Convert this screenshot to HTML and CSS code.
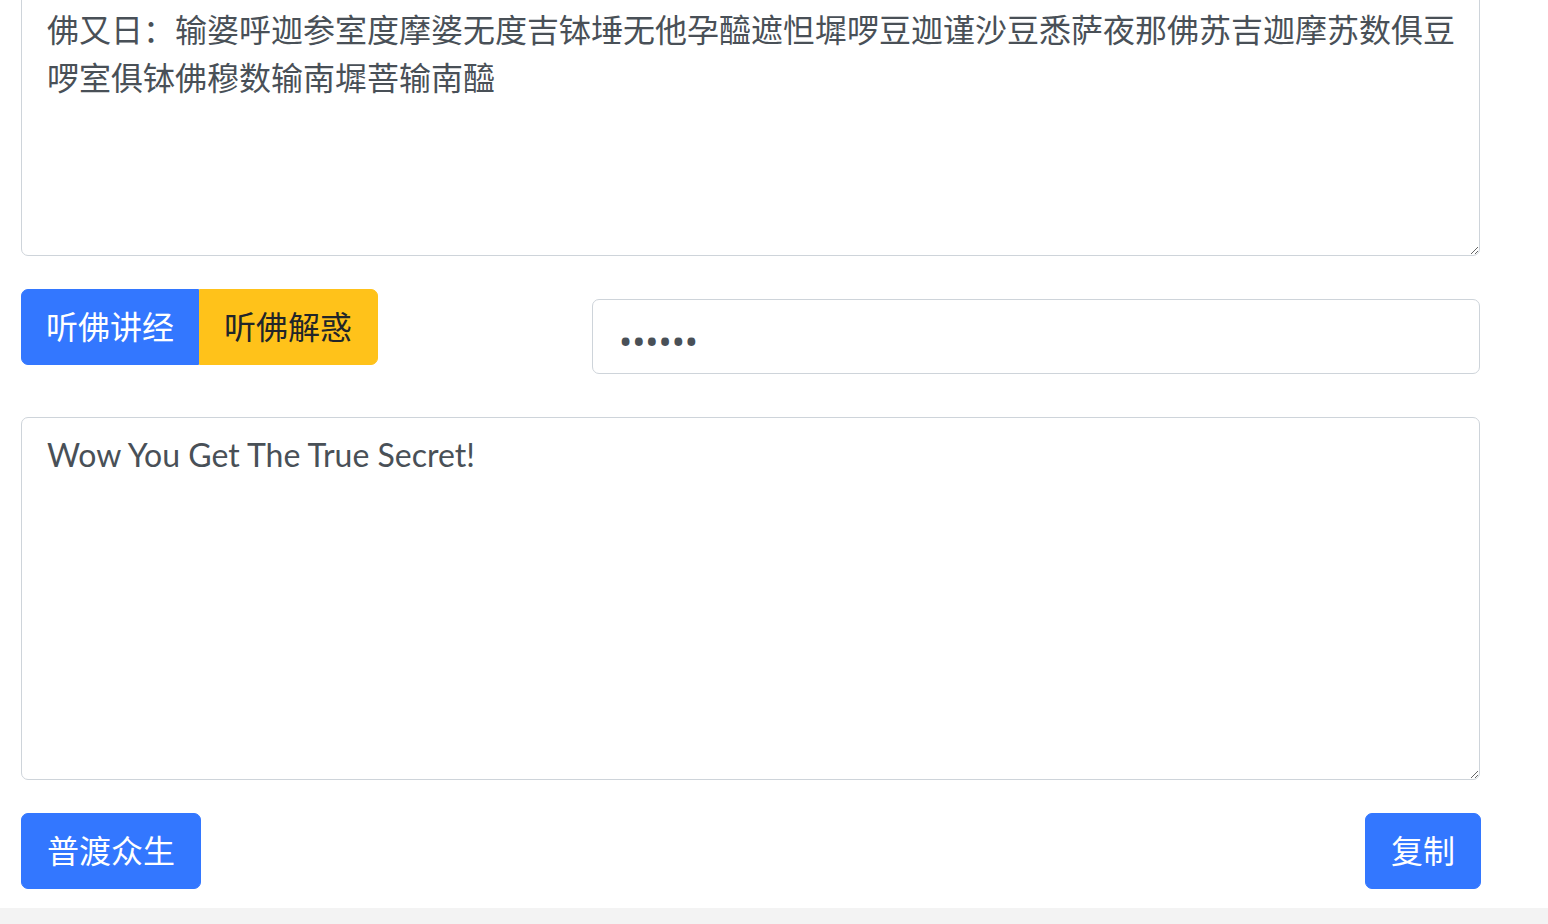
FILE: index.html
```html
<!DOCTYPE html>
<html lang="zh-CN">
<head>
<meta charset="utf-8">
<title>与佛论禅</title>
<link rel="stylesheet" href="styles.css">
</head>
<body>
<div class="page">
  <main class="wrap">
    <textarea class="box box-top">佛又日：输婆呼迦参室度摩婆无度吉钵埵无他孕醯遮怛墀啰豆迦谨沙豆悉萨夜那佛苏吉迦摩苏数俱豆啰室俱钵佛穆数输南墀菩输南醯</textarea>
    <div class="controls">
      <div class="btn-group">
        <button class="btn btn-primary btn-left">听佛讲经</button>
        <button class="btn btn-warning btn-right">听佛解惑</button>
      </div>
      <input class="field" type="password" value="123456">
    </div>
    <textarea class="box box-bottom">Wow You Get The True Secret!</textarea>
    <div class="actions">
      <button class="btn btn-primary">普渡众生</button>
      <button class="btn btn-primary btn-copy">复制</button>
    </div>
  </main>
  <footer class="foot"></footer>
</div>
</body>
</html>
```
FILE: styles.css
```css
html, body {
  margin: 0;
  padding: 0;
  background: #ffffff;
  overflow: hidden;
}
body {
  font-family: "Lato", "Noto Sans CJK SC", sans-serif;
  color: #495057;
}
.page {
  display: flex;
  flex-direction: column;
}
.wrap {
  display: flex;
  flex-direction: column;
  padding: 0 68px 19px 21px;
  margin-top: -8px;
}
.box {
  display: block;
  box-sizing: border-box;
  width: 100%;
  margin: 0;
  border: 1px solid #ced4da;
  border-radius: 7px;
  padding: 13px 22px 13px 25px;
  font-family: "Lato", "Noto Sans CJK SC", sans-serif;
  font-size: 32px;
  line-height: 48px;
  color: #495057;
  background: #fff;
  outline: none;
}
.box-top { height: 264px; }
.box-bottom { height: 363px; margin-top: 43px; }
.controls {
  display: flex;
  align-items: flex-start;
  margin-top: 33px;
}
.btn-group {
  display: flex;
  width: 571px;
  flex: none;
}
.btn {
  box-sizing: border-box;
  height: 76px;
  padding: 0 25px;
  border: 1px solid transparent;
  border-radius: 7px;
  font-family: "Lato", "Noto Sans CJK SC", sans-serif;
  font-size: 32px;
  line-height: 48px;
  cursor: pointer;
}
.btn-group .btn-left { padding: 0 24px; }
.btn-group .btn-right { padding: 0 25px 0 24px; }
.btn-primary {
  background: #3377ff;
  border-color: #3377ff;
  color: #ffffff;
}
.btn-warning {
  background: #ffc21a;
  border-color: #ffc21a;
  color: #212529;
}
.btn-left { border-radius: 7px 0 0 7px; }
.btn-right { border-radius: 0 7px 7px 0; }
.btn-copy { margin-right: -1px; }
.field {
  flex: 1;
  box-sizing: border-box;
  height: 75px;
  margin: 10px 0 0 0;
  border: 1px solid #ced4da;
  border-radius: 7px;
  padding: 8px 26px 0 26px;
  font-family: "Noto Sans", "Noto Sans CJK SC", sans-serif;
  font-size: 35px;
  color: #495057;
  background: #fff;
  outline: none;
}
.actions {
  display: flex;
  justify-content: space-between;
  margin-top: 33px;
}
.foot {
  height: 80px;
  background: #f3f3f3;
}
```
